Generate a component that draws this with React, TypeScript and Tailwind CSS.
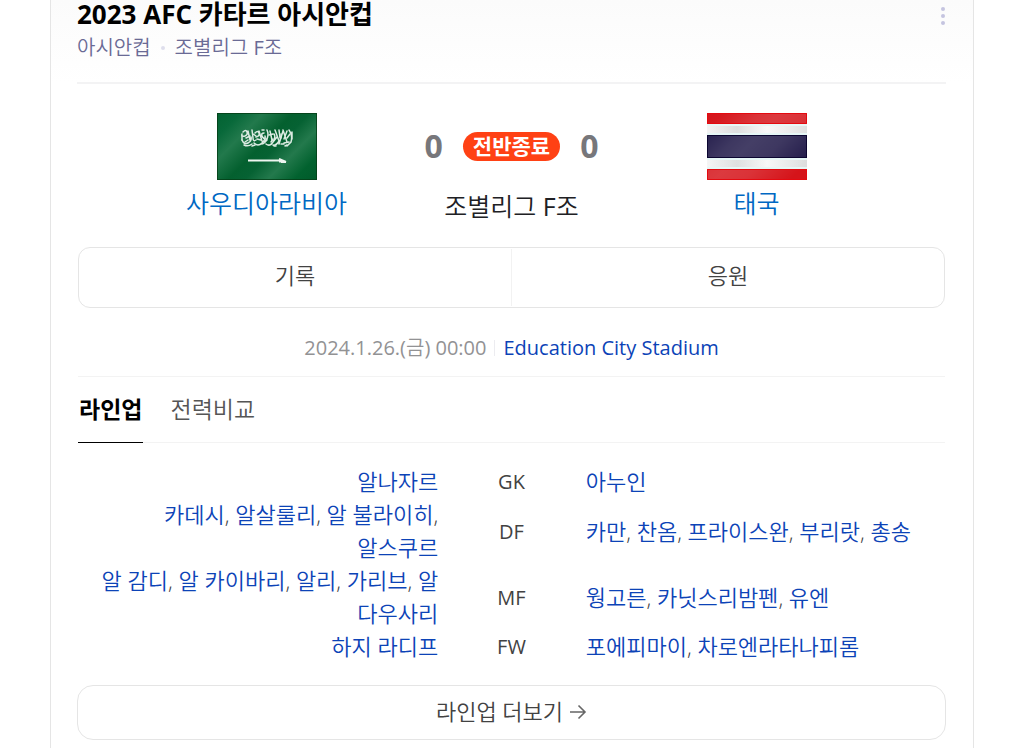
import type { ReactNode } from "react";

type Row = { pos: string; home: string[]; away: string[] };

const rows: Row[] = [
  { pos: "GK", home: ["알나자르"], away: ["아누인"] },
  { pos: "DF", home: ["카데시", "알살룰리", "알 불라이히", "알스쿠르"], away: ["카만", "찬옴", "프라이스완", "부리랏", "총송"] },
  { pos: "MF", home: ["알 감디", "알 카이바리", "알리", "가리브", "알 다우사리"], away: ["웡고른", "카닛스리밤펜", "유엔"] },
  { pos: "FW", home: ["하지 라디프"], away: ["포에피마이", "차로엔라타나피롬"] },
];

function Players({ names }: { names: string[] }) {
  return (
    <>
      {names.map((name, i) => (
        <span key={name}>
          <a href="#player" className="text-[#0c43b7]">{name}</a>
          {i < names.length - 1 && ", "}
        </span>
      ))}
    </>
  );
}

function SaudiFlag() {
  return (
    <svg width="100" height="67" viewBox="0 0 100 67" role="img" aria-label="사우디아라비아 국기">
      <defs>
        <linearGradient id="sa" gradientUnits="userSpaceOnUse" x1="8" y1="-8" x2="92" y2="75">
          <stop offset="0" stopColor="#026231" />
          <stop offset=".14" stopColor="#08693a" />
          <stop offset=".28" stopColor="#22794c" />
          <stop offset=".46" stopColor="#04602f" />
          <stop offset=".56" stopColor="#066233" />
          <stop offset=".7" stopColor="#23794c" />
          <stop offset=".86" stopColor="#02622f" />
          <stop offset="1" stopColor="#005a2a" />
        </linearGradient>
      </defs>
      <rect width="100" height="67" fill="url(#sa)" />
      <rect x=".5" y=".5" width="99" height="66" fill="none" stroke="#053d17" strokeOpacity=".8" />
      <g fill="none" stroke="#dcebe2" strokeWidth="1.5" strokeLinecap="round">
        <path d="M26 19q3-3 4 0t-2 4q-4 1-3-2M25 27q2 5 6 3t3-6M31 18l2 9M35 17l1 8q0 4 3 2M27 32q4 2 8-1M38 20q3-3 4 0t-3 4M37 30q4 4 8 0t3-7M42 18l3 10M47 20q-3 0-2 3t5 3M50 17q2 4 0 9t-6 5M49 31q4 3 7-2t1-8M53 18l2 9M58 17l4 11q-3 5-6 4M60 24l-4 5M62 17l1 8M66 18l-4 13M66 17l4 12M70 18l-3 8M72 17q4 5 2 12l-4 4M75 19v7" />
        <path d="M29 25l4-2M40 26l4 1M52 22l4-1M35 33l3-1M57 33l2 0M64 31l3 0M45 17l2 0M70 32l-2 1M25 23v4M28 29l3-2M36 21l3 2M46 29l4-2M54 29l2-3M67 30l5-1M73 21l-3 4M64 21v4" />
      </g>
      <path d="M31 47.500h32M62 46l7 3M64 49h5M63 45.500v4" stroke="#eef5f0" strokeWidth="2" fill="none" />
    </svg>
  );
}

function ThaiFlag() {
  return (
    <svg width="100" height="67" viewBox="0 0 100 67" role="img" aria-label="태국 국기">
      <defs>
        <linearGradient id="gloss" gradientUnits="userSpaceOnUse" x1="8" y1="-8" x2="92" y2="75">
          <stop offset="0" stopColor="#fff" stopOpacity="0" />
          <stop offset=".1" stopColor="#fff" stopOpacity=".02" />
          <stop offset=".32" stopColor="#fff" stopOpacity=".13" />
          <stop offset=".44" stopColor="#fff" stopOpacity=".16" />
          <stop offset=".62" stopColor="#fff" stopOpacity=".13" />
          <stop offset=".9" stopColor="#fff" stopOpacity="0" />
        </linearGradient>
        <linearGradient id="white" x1="0" y1="0" x2="1" y2="0">
          <stop offset="0" stopColor="#f4f4f4" />
          <stop offset=".3" stopColor="#d9dada" />
          <stop offset=".6" stopColor="#f7f7f7" />
          <stop offset="1" stopColor="#dcdddd" />
        </linearGradient>
      </defs>
      <rect width="100" height="67" fill="url(#white)" />
      <rect width="100" height="11" fill="#d5141a" />
      <rect y="56" width="100" height="11" fill="#d5141a" />
      <rect y="22" width="100" height="23" fill="#211a49" />
      <rect width="100" height="67" fill="url(#gloss)" />
      <path d="M0 12h100M0 21h100M0 46h100M0 55h100" stroke="#e6f7f6" strokeWidth="2" />
      <path d="M.5 10.500V.5h99v10z M.5 56.500h99v10H.5z" fill="none" stroke="#e40a10" />
      <rect x=".5" y="22.500" width="99" height="22" fill="none" stroke="#0c0631" />
    </svg>
  );
}

function Team({ name, children }: { name: string; children: ReactNode }) {
  return (
    <a href="#team" className="flex flex-col items-center gap-[7px] text-[25px] leading-8 text-[#0068c3]">
      {children}
      <span>{name}</span>
    </a>
  );
}

export default function App() {
  return (
    <div className="bg-white font-['Open_Sans','Noto_Sans_CJK_KR',sans-serif] font-[350] text-[#424242]">
      <main className="mr-[57px] ml-[50px] border-x border-[#e5e5e5] pb-2">
        <header className="bg-linear-to-b from-[#fbfbfb] to-white pr-[27px] pl-[26px]">
          <div className="flex items-start justify-between border-b-2 border-[#f3f3f4] pb-[19px]">
            <div>
              <h1 className="text-[26px] leading-7 font-bold text-black">2023 AFC 카타르 아시안컵</h1>
              <p className="flex items-center gap-2.5 pt-[5px] text-[20px] leading-[30px] text-[#6a6a95]">
                아시안컵
                <span className="size-1 rounded-full bg-[#dedeec]" />
                <span>조별리그 <span className="font-normal">F</span>조</span>
              </p>
            </div>
            <button type="button" aria-label="더보기" className="flex flex-col gap-[3px] pt-[7px] pr-px">
              <span className="size-1 rounded-full bg-[#c5c4e0]" />
              <span className="size-1 rounded-full bg-[#c5c4e0]" />
              <span className="size-1 rounded-full bg-[#c5c4e0]" />
            </button>
          </div>
        </header>

        <div className="pr-7 pl-[27px]">
          <section className="grid grid-cols-3 px-[66px] pt-[29px]">
            <Team name="사우디아라비아"><SaudiFlag /></Team>
            <div className="flex flex-col items-center">
              <div className="flex items-center gap-5 pt-[18px] text-[#77777b]">
                <strong className="text-[32px] leading-[30px] font-bold">0</strong>
                <span className="rounded-full bg-[#ff4114] px-[10px] pb-px text-[21px] leading-7 font-bold whitespace-nowrap text-white">전반종료</span>
                <strong className="text-[32px] leading-[30px] font-bold">0</strong>
              </div>
              <p className="pt-[29px] text-[25px] leading-8 whitespace-nowrap text-[#202024]">조별리그 <span className="font-normal">F</span>조</p>
            </div>
            <Team name="태국"><ThaiFlag /></Team>
          </section>

          <nav className="mt-[25px] flex rounded-xl border border-[#e5e5e5] py-px text-center text-[22px] leading-[53px]">
            <a href="#record" className="flex-1 border-r border-[#f2f2f2] pb-1">기록</a>
            <a href="#cheer" className="flex-1 pb-1">응원</a>
          </nav>

          <div className="flex items-center justify-center border-b border-[#f3f3f3] pt-6 pb-3 text-[20px] leading-8">
            <span className="font-normal text-[#929294]">2024.1.26.(<span className="font-[350]">금</span>) 00:00</span>
            <span className="mx-2 h-4 w-px bg-[#ececf0]" />
            <a href="#stadium" className="font-normal text-[#0c43b7]">Education City Stadium</a>
          </div>

          <div role="tablist" className="flex gap-[27px] border-b border-[#f3f3f3] text-[23px] leading-[65px]">
            <button type="button" role="tab" aria-selected="true" className="-mb-px border-b border-black px-px font-bold text-black">라인업</button>
            <button type="button" role="tab" aria-selected="false" className="text-[#555]">전력비교</button>
          </div>

          <table className="mt-[22px] w-full table-fixed text-[22px] leading-[33px]">
            <tbody>
              {rows.map((row) => (
                <tr key={row.pos}>
                  <td className="w-5/12 pr-px pl-3 text-right break-keep">
                    <Players names={row.home} />
                  </td>
                  <th scope="row" className="w-2/12 text-center text-[20px] font-normal">{row.pos}</th>
                  <td className="w-5/12 pl-0.5 break-keep">
                    <Players names={row.away} />
                  </td>
                </tr>
              ))}
            </tbody>
          </table>
        </div>

        <div className="pt-[22px] pr-[27px] pl-[26px]">
          <a href="#lineup" className="flex items-center justify-center gap-1.5 rounded-2xl border border-[#e5e5e5] pb-0.5 text-[22px] leading-[51px]">
            라인업 더보기
            <svg width="18" height="16" viewBox="0 0 18 16" fill="none" stroke="#666" strokeWidth="1.6" aria-hidden="true">
              <path d="M1 8h15M9.500 1.500L16 8l-6.500 6.500" />
            </svg>
          </a>
        </div>
      </main>
    </div>
  );
}
